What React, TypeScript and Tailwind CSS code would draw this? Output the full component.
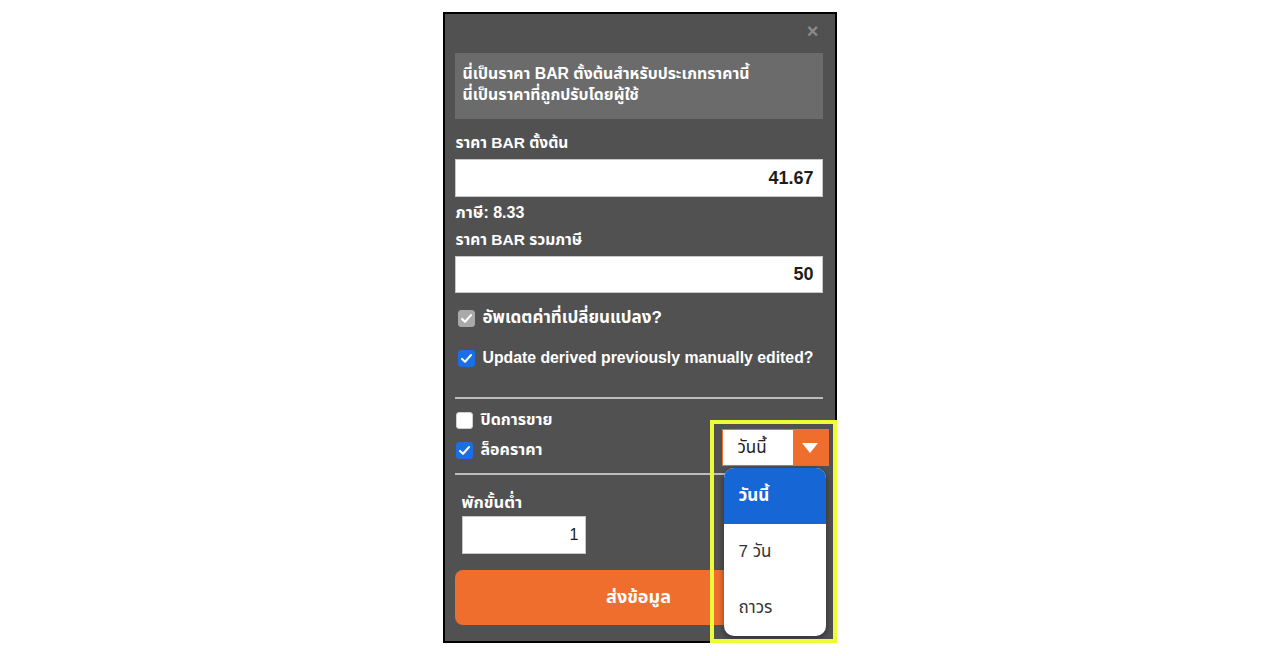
import { useState } from "react"

function Box({ state }: { state: "off" | "on" | "disabled" }) {
  const cls =
    state === "on"
      ? "bg-[#1a6fe6] border-[#1a6fe6]"
      : state === "disabled"
      ? "bg-[#a9a9a9] border-[#a9a9a9]"
      : "bg-white border-[#d0d0d0]"
  return (
    <span className={"w-[17px] h-[17px] rounded-[3px] border flex items-center justify-center shrink-0 " + cls}>
      {state !== "off" && (
        <svg width="13" height="13" viewBox="0 0 16 16">
          <path d="M2.5 8.5 L6.2 12 L13.5 3.8" fill="none" stroke="white" strokeWidth="2.6" strokeLinecap="round" strokeLinejoin="round" />
        </svg>
      )}
    </span>
  )
}

export default function App() {
  const [bar] = useState("41.67")
  const [barTax] = useState("50")
  const [minStay] = useState("1")
  const font = { fontFamily: '"Liberation Sans", Arial, "Noto Sans Thai", "Noto Sans", sans-serif' }

  return (
    <div className="w-full h-[656px] bg-white" style={font}>
      <div className="relative w-[394px] mx-auto mt-[12px] border-2 border-black bg-[#515151] pl-[10px] pr-[12px] pb-[16px] flex flex-col">
        <div className="h-[39px] flex items-start justify-end pt-[10px] pr-[4px]">
          <span className="text-[#8a8a8a] text-[20px] leading-[14px] font-bold">×</span>
        </div>

        <div className="h-[66px] bg-[#6b6b6b] pl-[8px] pt-[10px] text-white text-[15.8px] font-bold leading-[21px]">
          <p>นี่เป็นราคา BAR ตั้งต้นสำหรับประเภทราคานี้</p>
          <p>นี่เป็นราคาที่ถูกปรับโดยผู้ใช้</p>
        </div>

        <p className="mt-[13px] h-[22px] leading-[22px] text-white text-[15.5px] font-bold pl-[1px]">ราคา BAR ตั้งต้น</p>
        <div className="mt-[5px] h-[38px] bg-white border border-[#c8c8c8] flex items-center justify-end pr-[8px] text-[18px] font-bold text-[#1d1d1d]">{bar}</div>

        <p className="mt-[5px] h-[22px] leading-[22px] text-white text-[16px] font-bold pl-[1px]">ภาษี: 8.33</p>
        <p className="mt-[5px] h-[22px] leading-[22px] text-white text-[15.5px] font-bold pl-[1px]">ราคา BAR รวมภาษี</p>
        <div className="mt-[5px] h-[37px] bg-white border border-[#c8c8c8] flex items-center justify-end pr-[8px] text-[18px] font-bold text-[#1d1d1d]">{barTax}</div>

        <div className="mt-[13px] h-[24px] flex items-center gap-[8px] pl-[3px]">
          <Box state="disabled" />
          <span className="text-white text-[17px] font-bold leading-[24px]">อัพเดตค่าที่เปลี่ยนแปลง?</span>
        </div>
        <div className="mt-[16px] h-[24px] flex items-center gap-[8px] pl-[3px]">
          <Box state="on" />
          <span className="text-white text-[15.8px] font-bold leading-[24px]">Update derived previously manually edited?</span>
        </div>

        <div className="mt-[27px] h-[2px] bg-[#bdbdbd]" />

        <div className="mt-[11px] h-[20px] flex items-center gap-[8px] pl-[1px]">
          <Box state="off" />
          <span className="text-white text-[16px] font-bold leading-[20px]">ปิดการขาย</span>
        </div>
        <div className="h-[37px] flex items-center justify-between">
          <div className="flex items-center gap-[8px] pl-[1px] pt-[3px]">
            <Box state="on" />
            <span className="text-white text-[16px] font-bold leading-[20px]">ล็อคราคา</span>
          </div>
          <div className="relative mr-[-6px] mt-[-2px] h-[37px] w-[107px] border border-[#ef6e2e] flex">
            <div className="flex-1 bg-white flex items-center pl-[15px] text-[17px] text-[#222]">วันนี้</div>
            <div className="w-[35px] bg-[#ef6e2e] flex items-center justify-center">
              <svg width="18" height="12" viewBox="0 0 18 12">
                <path d="M1 1 H17 L9 11 Z" fill="white" />
              </svg>
            </div>
            <div className="absolute left-[1px] top-[38px] w-[102px] h-[168px] bg-white rounded-[10px] overflow-hidden shadow-[0_2px_6px_rgba(0,0,0,0.45)] z-10 text-[17px]">
              <div className="h-[56px] bg-[#1766d6] text-white font-bold flex items-center pl-[15px]">วันนี้</div>
              <div className="h-[56px] text-[#333] flex items-center pl-[15px]">7 วัน</div>
              <div className="h-[56px] text-[#333] flex items-center pl-[15px]">ถาวร</div>
            </div>
          </div>
        </div>

        <div className="mt-[6px] h-[2px] bg-[#bdbdbd]" />

        <p className="mt-[16px] h-[22px] leading-[22px] text-white text-[16.5px] font-bold pl-[7px]">พักขั้นต่ำ</p>
        <div className="mt-[3px] ml-[7px] w-[124px] h-[38px] bg-white border border-[#c8c8c8] flex items-center justify-end pr-[6px] text-[16px] text-[#1d1d1d]">{minStay}</div>

        <button className="mt-[16px] h-[55px] rounded-[8px] bg-[#ef6e2e] text-white text-[18px] font-bold">ส่งข้อมูล</button>

        <div className="absolute left-[265px] top-[406px] w-[127px] h-[223px] border-[4px] border-[#eefb3a] pointer-events-none z-20" />
      </div>
    </div>
  )
}
